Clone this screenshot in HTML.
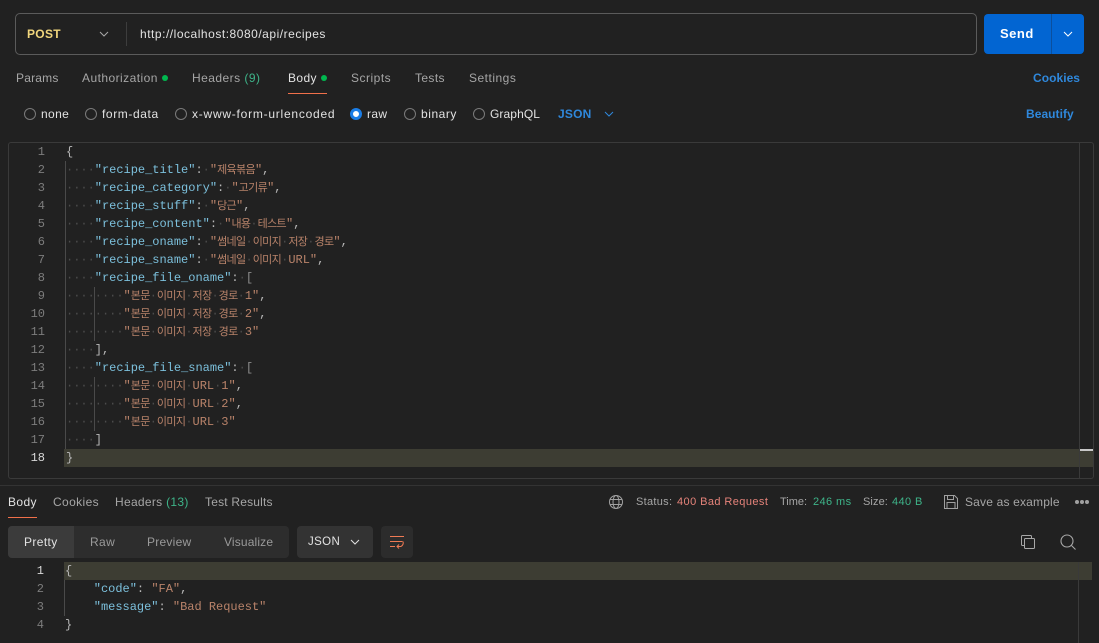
<!DOCTYPE html>
<html lang="ko"><head><meta charset="utf-8"><title>Request</title>
<style>
html,body{margin:0;padding:0;background:#212121;width:1099px;height:643px;overflow:hidden}
#p{position:relative;width:1099px;height:643px;overflow:hidden;font:12px/16px "Liberation Sans","Noto Sans CJK KR",sans-serif;color:#a6a6a6}
#p>*{position:absolute}
.t{white-space:nowrap;letter-spacing:.38px}
.w{color:#e2e2e2}.b{color:#2f88dc}.g{color:#3eb489}
.c{font:12px/18px "Liberation Mono","Noto Sans CJK KR",monospace;color:#b8b8b8;white-space:pre;left:66px;letter-spacing:-.01px}
.c div{height:18px;line-height:18px}
.n{font:12px/18px "Liberation Mono",monospace;color:#7d7d7d;text-align:right;width:30px;left:15px}
.k{color:#7cc0dc}.s{color:#b9836a}.d{color:#4c4c4c}
.h{font-size:11px;letter-spacing:-.65px;line-height:0}
.r{width:10px;height:10px;border:1px solid #7a7a7a;border-radius:50%;top:108px}
.v{background:#4a4a4a;width:1px}
</style></head><body><div id="p">
<div style="left:15px;top:13px;width:960px;height:40px;border:1px solid #5b5b5b;border-radius:5px"></div>
<div class="t" style="left:27px;top:26px;color:#f1d67d;font-weight:bold;letter-spacing:.3px">POST</div>
<svg style="left:98px;top:29px" width="12" height="10" fill="none" stroke="#a8a8a8"><path d="M2 3l4 4 4-4"/></svg>
<div style="left:126px;top:22px;width:1px;height:24px;background:#3d3d3d"></div>
<div class="t w" style="left:140px;top:26px;letter-spacing:.52px">http://localhost:8080/api/recipes</div>
<div style="left:984px;top:14px;width:100px;height:40px;background:#0265d2;border-radius:4px"></div>
<div style="left:1051px;top:14px;width:1px;height:40px;background:#0b4f9d"></div>
<div style="left:1000px;top:25px;color:#fff;font:bold 13px/18px 'Liberation Sans',sans-serif;letter-spacing:.5px">Send</div>
<svg style="left:1062px;top:29px" width="12" height="10" fill="none" stroke="#fff"><path d="M2 3l4 4 4-4"/></svg>

<div class="t" style="left:16px;top:70px;letter-spacing:.2px">Params</div>
<div class="t" style="left:82px;top:70px;letter-spacing:.45px">Authorization</div>
<div style="left:162px;top:75px;width:6px;height:6px;border-radius:50%;background:#00b84f"></div>
<div class="t" style="left:192px;top:70px;letter-spacing:.46px">Headers <span class="g">(9)</span></div>
<div class="t w" style="left:288px;top:70px">Body</div>
<div style="left:321px;top:75px;width:6px;height:6px;border-radius:50%;background:#00b84f"></div>
<div style="left:288px;top:93px;width:39px;height:1px;background:#f0704a"></div>
<div class="t" style="left:351px;top:70px;letter-spacing:.5px">Scripts</div>
<div class="t" style="left:415px;top:70px">Tests</div>
<div class="t" style="left:469px;top:70px;letter-spacing:.5px">Settings</div>
<div class="t b" style="left:1033px;top:70px;font-weight:bold;letter-spacing:.05px">Cookies</div>

<div class="r" style="left:24px"></div><div class="t w" style="left:41px;top:106px">none</div>
<div class="r" style="left:85px"></div><div class="t w" style="left:102px;top:106px;letter-spacing:.6px">form-data</div>
<div class="r" style="left:175px"></div><div class="t w" style="left:192px;top:106px;letter-spacing:.76px">x-www-form-urlencoded</div>
<div style="left:350px;top:108px;width:12px;height:12px;border-radius:50%;background:#fff;box-sizing:border-box;border:3px solid #1a7de6"></div><div class="t w" style="left:367px;top:106px">raw</div>
<div class="r" style="left:404px"></div><div class="t w" style="left:421px;top:106px;letter-spacing:.55px">binary</div>
<div class="r" style="left:473px"></div><div class="t w" style="left:490px;top:106px;letter-spacing:.1px">GraphQL</div>
<div class="t b" style="left:558px;top:106px;font-weight:bold;letter-spacing:.2px">JSON</div>
<svg style="left:603px;top:109px" width="12" height="10" fill="none" stroke="#2f88dc"><path d="M2 3l4 4 4-4"/></svg>
<div class="t b" style="left:1026px;top:106px;font-weight:bold;letter-spacing:.05px">Beautify</div>

<div style="left:8px;top:142px;width:1086px;height:337px;border:1px solid #3a3a3a;border-radius:3px;box-sizing:border-box"></div>
<div style="left:64px;top:449px;width:1029px;height:18px;background:#3d3d33"></div>
<div style="left:1079px;top:143px;width:1px;height:336px;background:#3a3a3a"></div>
<div style="left:1080px;top:449px;width:13px;height:2px;background:#c8c8c8"></div>
<div class="v" style="left:65px;top:161px;height:288px"></div>
<div class="v" style="left:94px;top:287px;height:54px"></div>
<div class="v" style="left:94px;top:377px;height:54px"></div>

<div class="n" style="top:143px">1<br>2<br>3<br>4<br>5<br>6<br>7<br>8<br>9<br>10<br>11<br>12<br>13<br>14<br>15<br>16<br>17<br><span style="color:#d8d8d8">18</span></div>
<div class="c" style="top:143px"><div>{</div><div><span class="d">····</span><span class="k">"recipe_title"</span>:<span class="d">·</span><span class="s">"<span class="h">제육볶음</span>"</span>,</div><div><span class="d">····</span><span class="k">"recipe_category"</span>:<span class="d">·</span><span class="s">"<span class="h">고기류</span>"</span>,</div><div><span class="d">····</span><span class="k">"recipe_stuff"</span>:<span class="d">·</span><span class="s">"<span class="h">당근</span>"</span>,</div><div><span class="d">····</span><span class="k">"recipe_content"</span>:<span class="d">·</span><span class="s">"<span class="h">내용</span><span class="d">·</span><span class="h">테스트</span>"</span>,</div><div><span class="d">····</span><span class="k">"recipe_oname"</span>:<span class="d">·</span><span class="s">"<span class="h">썸네일</span><span class="d">·</span><span class="h">이미지</span><span class="d">·</span><span class="h">저장</span><span class="d">·</span><span class="h">경로</span>"</span>,</div><div><span class="d">····</span><span class="k">"recipe_sname"</span>:<span class="d">·</span><span class="s">"<span class="h">썸네일</span><span class="d">·</span><span class="h">이미지</span><span class="d">·</span>URL"</span>,</div><div><span class="d">····</span><span class="k">"recipe_file_oname"</span>:<span class="d">·</span><span style="color:#8a8a8a">[</span></div><div><span class="d">········</span><span class="s">"<span class="h">본문</span><span class="d">·</span><span class="h">이미지</span><span class="d">·</span><span class="h">저장</span><span class="d">·</span><span class="h">경로</span><span class="d">·</span>1"</span>,</div><div><span class="d">········</span><span class="s">"<span class="h">본문</span><span class="d">·</span><span class="h">이미지</span><span class="d">·</span><span class="h">저장</span><span class="d">·</span><span class="h">경로</span><span class="d">·</span>2"</span>,</div><div><span class="d">········</span><span class="s">"<span class="h">본문</span><span class="d">·</span><span class="h">이미지</span><span class="d">·</span><span class="h">저장</span><span class="d">·</span><span class="h">경로</span><span class="d">·</span>3"</span></div><div><span class="d">····</span>],</div><div><span class="d">····</span><span class="k">"recipe_file_sname"</span>:<span class="d">·</span><span style="color:#8a8a8a">[</span></div><div><span class="d">········</span><span class="s">"<span class="h">본문</span><span class="d">·</span><span class="h">이미지</span><span class="d">·</span>URL<span class="d">·</span>1"</span>,</div><div><span class="d">········</span><span class="s">"<span class="h">본문</span><span class="d">·</span><span class="h">이미지</span><span class="d">·</span>URL<span class="d">·</span>2"</span>,</div><div><span class="d">········</span><span class="s">"<span class="h">본문</span><span class="d">·</span><span class="h">이미지</span><span class="d">·</span>URL<span class="d">·</span>3"</span></div><div><span class="d">····</span>]</div><div>}</div></div>

<div style="left:0;top:485px;width:1099px;height:1px;background:#333"></div>
<div class="t w" style="left:8px;top:494px">Body</div>
<div style="left:8px;top:517px;width:29px;height:1px;background:#f0704a"></div>
<div class="t" style="left:53px;top:494px">Cookies</div>
<div class="t" style="left:115px;top:494px;letter-spacing:.3px">Headers <span class="g">(13)</span></div>
<div class="t" style="left:205px;top:494px;letter-spacing:.2px">Test Results</div>

<svg style="left:608px;top:494px" width="16" height="16" fill="none" stroke="#a0a0a0"><circle cx="8" cy="8" r="6.5"/><ellipse cx="8" cy="8" rx="3" ry="6.5"/><path d="M2 5.5h12M2 10.5h12"/></svg>
<div class="t" style="left:636px;top:494px;font-size:11px;letter-spacing:.3px">Status:</div>
<div class="t" style="left:677px;top:494px;font-size:11px;color:#e5837a;letter-spacing:.42px">400 Bad Request</div>
<div class="t" style="left:780px;top:494px;font-size:11px;letter-spacing:.0px">Time:</div>
<div class="t g" style="left:813px;top:494px;font-size:11px;letter-spacing:.4px">246 ms</div>
<div class="t" style="left:863px;top:494px;font-size:11px;letter-spacing:.1px">Size:</div>
<div class="t g" style="left:892px;top:494px;font-size:11px;letter-spacing:.4px">440 B</div>
<svg style="left:943px;top:494px" width="16" height="16" fill="none" stroke="#a0a0a0"><path d="M1.5 1.5h10l3 3v10h-13zM4.5 1.5v4h6v-4M4 14.5v-6h8v6"/></svg>
<div class="t" style="left:965px;top:494px;letter-spacing:.18px">Save as example</div>
<svg style="left:1074px;top:499px" width="16" height="6" fill="#a0a0a0"><circle cx="3" cy="3" r="2"/><circle cx="8" cy="3" r="2"/><circle cx="13" cy="3" r="2"/></svg>

<div style="left:8px;top:526px;width:281px;height:32px;background:#2d2d2d;border-radius:4px"></div>
<div style="left:8px;top:526px;width:66px;height:32px;background:#3b3b3b;border-radius:4px 0 0 4px"></div>
<div class="t w" style="left:24px;top:534px">Pretty</div>
<div class="t" style="left:90px;top:534px;color:#9a9a9a">Raw</div>
<div class="t" style="left:147px;top:534px;color:#9a9a9a;letter-spacing:.25px">Preview</div>
<div class="t" style="left:224px;top:534px;color:#9a9a9a;letter-spacing:.15px">Visualize</div>
<div style="left:297px;top:526px;width:76px;height:32px;background:#333;border-radius:4px"></div>
<div class="t w" style="left:308px;top:534px;font-size:11.5px">JSON</div>
<svg style="left:349px;top:537px" width="12" height="10" fill="none" stroke="#e2e2e2"><path d="M2 3l4 4 4-4"/></svg>
<div style="left:381px;top:526px;width:32px;height:32px;background:#2c2c2c;border-radius:4px"></div>
<svg style="left:389px;top:535px" width="16" height="15" fill="none" stroke="#ef7a54"><path d="M1 1.5h14M1 6.5h12.5M1 11.5h5M14 6.5q1 3-2 5H8M10 9.5l-2 2 2 2"/></svg>
<svg style="left:1020px;top:534px" width="16" height="16" fill="none" stroke="#a8a8a8"><path d="M4 11.5H2.5q-1 0-1-1v-8q0-1 1-1h8q1 0 1 1V4"/><rect x="4.5" y="4.5" width="10" height="10" rx="1"/></svg>
<svg style="left:1060px;top:534px" width="16" height="16" fill="none" stroke="#a8a8a8" stroke-width="1.1"><circle cx="7" cy="7" r="6"/><path d="M11.5 11.5l4 4"/></svg>

<div style="left:64px;top:562px;width:1028px;height:18px;background:#3d3d33"></div>
<div style="left:1078px;top:562px;width:1px;height:81px;background:#3a3a3a"></div>
<div class="v" style="left:64px;top:580px;height:36px"></div>
<div class="n" style="top:562px;left:14px"><span style="color:#d8d8d8">1</span><br>2<br>3<br>4</div>
<div class="c" style="top:562px;left:65px"><div>{</div><div>    <span class="k">"code"</span>: <span class="s">"FA"</span>,</div><div>    <span class="k">"message"</span>: <span class="s">"Bad Request"</span></div><div>}</div></div>
</div></body></html>
